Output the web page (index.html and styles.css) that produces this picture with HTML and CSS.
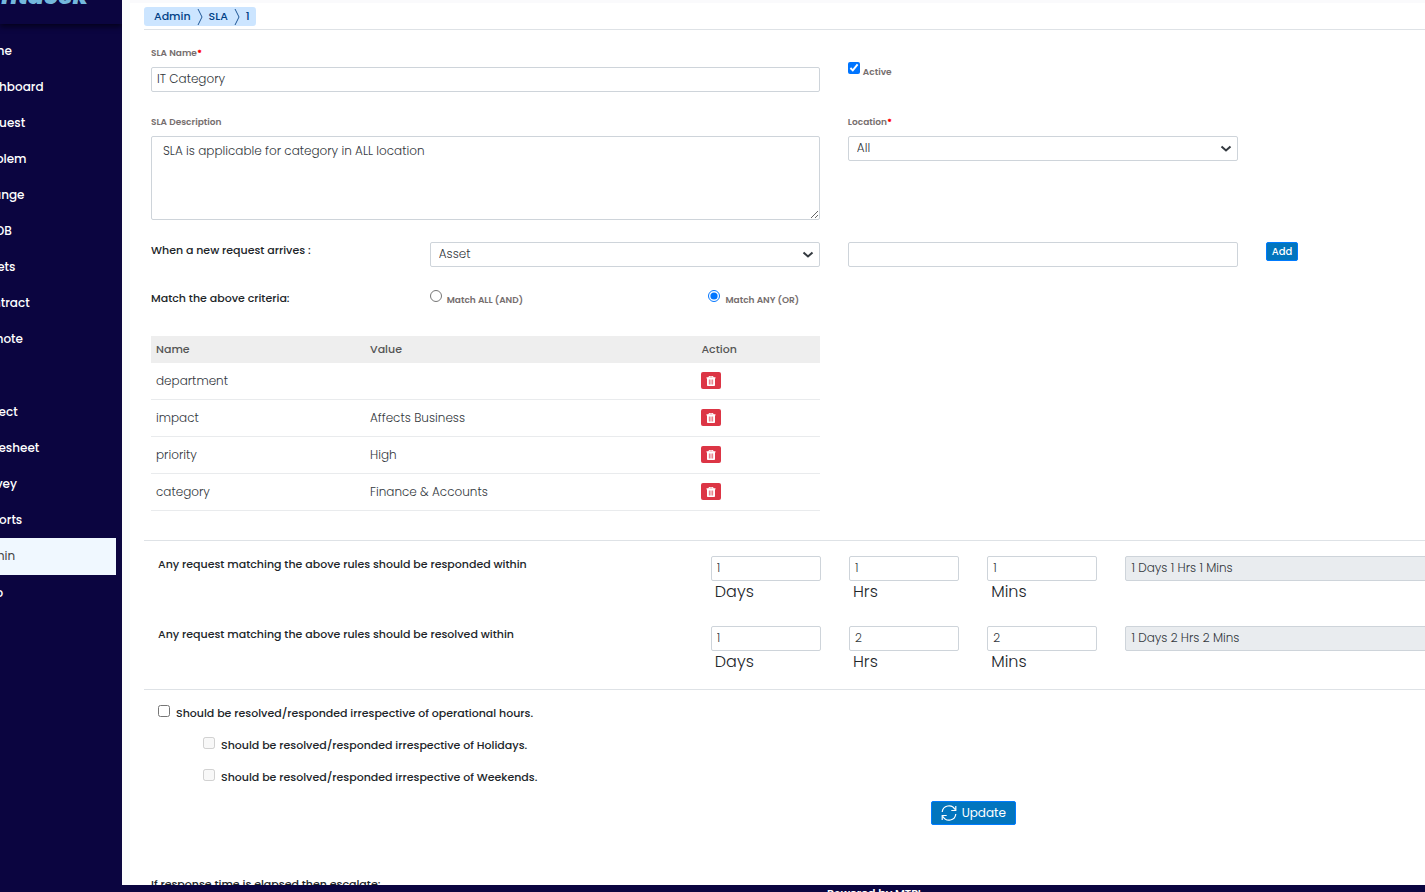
FILE: index.html
```
<!DOCTYPE html>
<html lang="en">
    <head>
        <meta charset="UTF-8">
        <meta name="viewport" content="width=device-width, initial-scale=1.0">
        <title>SLA</title>
        <link rel="stylesheet" href="styles.css">
    </head>
    <body>
        <svg class="sprite" aria-hidden="true">
            <symbol id="trash" viewBox="0 0 10 10">
                <path fill="#fff" fill-rule="evenodd" d="M3 0h4l.6 1.300H9.500v1.200H9V9.200q0 .8-.8.8H1.800q-.8 0-.8-.8V2.500H.5V1.300h1.900zM3.700.8l-.3.500h3.200L6.300.8zM2.900 3.600v5h.7v-5zM4.650 3.600v5h.7v-5zM6.400 3.600v5h.7v-5z"/>
            </symbol>
        </svg>

        <div class="wrapper">
            <aside class="sidebar">
                <div class="logo">frontdesk</div>
                <nav>
                    <a href="#">Home</a>
                    <a href="#">Dashboard</a>
                    <a href="#">Request</a>
                    <a href="#">Problem</a>
                    <a href="#">Change</a>
                    <a href="#">CMDB</a>
                    <a href="#">Assets</a>
                    <a href="#">Contract</a>
                    <a href="#">Remote</a>
                    <a href="#" class="group">Project</a>
                    <a href="#">Timesheet</a>
                    <a href="#">Survey</a>
                    <a href="#">Reports</a>
                    <a href="#" class="active">Admin</a>
                    <a href="#">Help</a>
                </nav>
            </aside>

            <main>
                <div class="breadcrumb-bar">
                    <div class="breadcrumb">
                        <a href="#">Admin</a>
                        <svg width="6" height="18" viewBox="0 0 6 18"><path d="M1 1l4 8-4 8"/></svg>
                        <a href="#">SLA</a>
                        <svg width="6" height="18" viewBox="0 0 6 18"><path d="M1 1l4 8-4 8"/></svg>
                        <a href="#">1</a>
                    </div>
                </div>

                <form class="content">
                    <div class="row name-row">
                        <div class="col-5">
                            <label class="title" for="slaName">SLA Name<b>*</b></label>
                            <input type="text" class="control" id="slaName" value="IT Category">
                        </div>
                        <div class="col-3 check">
                            <input type="checkbox" id="active" checked>
                            <label for="active">Active</label>
                        </div>
                    </div>

                    <div class="row desc-row">
                        <div class="col-5">
                            <label class="title" for="slaDesc">SLA Description</label>
                            <textarea class="control" id="slaDesc">SLA is applicable for category in ALL location</textarea>
                        </div>
                        <div class="col-3">
                            <label class="title" for="location">Location<b>*</b></label>
                            <div class="select">
                                <select class="control" id="location"><option>All</option></select>
                                <svg width="12" height="8" viewBox="0 0 12 8"><path d="M1.500 1.500L6 5.500l4.500-4"/></svg>
                            </div>
                        </div>
                    </div>

                    <div class="row criteria-row">
                        <label class="col-2 strong" for="field">When a new request arrives :</label>
                        <div class="col-3">
                            <div class="select">
                                <select class="control" id="field"><option>Asset</option></select>
                                <svg width="12" height="8" viewBox="0 0 12 8"><path d="M1.500 1.500L6 5.500l4.500-4"/></svg>
                            </div>
                        </div>
                        <div class="col-3">
                            <input type="text" class="control" aria-label="Value">
                        </div>
                        <div class="col-1">
                            <button type="button" class="btn btn-add">Add</button>
                        </div>
                    </div>

                    <div class="row match-row">
                        <span class="col-2 strong">Match the above criteria:</span>
                        <div class="col-2 check radio">
                            <input type="radio" name="match" id="matchAll">
                            <label for="matchAll">Match ALL (AND)</label>
                        </div>
                        <div class="col-2 check radio">
                            <input type="radio" name="match" id="matchAny" checked>
                            <label for="matchAny">Match ANY (OR)</label>
                        </div>
                    </div>

                    <div class="row">
                        <div class="col-5">
                            <table>
                                <thead>
                                    <tr><th class="name">Name</th><th class="value">Value</th><th>Action</th></tr>
                                </thead>
                                <tbody>
                                    <tr>
                                        <td>department</td>
                                        <td></td>
                                        <td><button type="button" class="delete" aria-label="Delete"><svg width="10" height="10"><use href="#trash"/></svg></button></td>
                                    </tr>
                                    <tr>
                                        <td>impact</td>
                                        <td>Affects Business</td>
                                        <td><button type="button" class="delete" aria-label="Delete"><svg width="10" height="10"><use href="#trash"/></svg></button></td>
                                    </tr>
                                    <tr>
                                        <td>priority</td>
                                        <td>High</td>
                                        <td><button type="button" class="delete" aria-label="Delete"><svg width="10" height="10"><use href="#trash"/></svg></button></td>
                                    </tr>
                                    <tr>
                                        <td>category</td>
                                        <td>Finance &amp; Accounts</td>
                                        <td><button type="button" class="delete" aria-label="Delete"><svg width="10" height="10"><use href="#trash"/></svg></button></td>
                                    </tr>
                                </tbody>
                            </table>
                        </div>
                    </div>

                    <section class="times">
                        <div class="row">
                            <span class="col-4 strong">Any request matching the above rules should be responded within</span>
                            <div class="col-1">
                                <input type="text" class="control" id="respDays" value="1">
                                <label class="unit" for="respDays">Days</label>
                            </div>
                            <div class="col-1">
                                <input type="text" class="control" id="respHrs" value="1">
                                <label class="unit" for="respHrs">Hrs</label>
                            </div>
                            <div class="col-1">
                                <input type="text" class="control" id="respMins" value="1">
                                <label class="unit" for="respMins">Mins</label>
                            </div>
                            <div class="col-3">
                                <input type="text" class="control" value="1 Days 1 Hrs 1 Mins" aria-label="Response time" readonly>
                            </div>
                        </div>
                        <div class="row">
                            <span class="col-4 strong">Any request matching the above rules should be resolved within</span>
                            <div class="col-1">
                                <input type="text" class="control" id="resDays" value="1">
                                <label class="unit" for="resDays">Days</label>
                            </div>
                            <div class="col-1">
                                <input type="text" class="control" id="resHrs" value="2">
                                <label class="unit" for="resHrs">Hrs</label>
                            </div>
                            <div class="col-1">
                                <input type="text" class="control" id="resMins" value="2">
                                <label class="unit" for="resMins">Mins</label>
                            </div>
                            <div class="col-3">
                                <input type="text" class="control" value="1 Days 2 Hrs 2 Mins" aria-label="Resolution time" readonly>
                            </div>
                        </div>
                    </section>

                    <section class="options">
                        <div class="option">
                            <input type="checkbox" id="hours">
                            <label class="strong" for="hours">Should be resolved/responded irrespective of operational hours.</label>
                        </div>
                        <div class="option sub">
                            <input type="checkbox" id="holidays" disabled>
                            <label class="strong" for="holidays">Should be resolved/responded irrespective of Holidays.</label>
                        </div>
                        <div class="option sub">
                            <input type="checkbox" id="weekends" disabled>
                            <label class="strong" for="weekends">Should be resolved/responded irrespective of Weekends.</label>
                        </div>
                    </section>

                    <div class="actions">
                        <button type="button" class="btn btn-update">
                            <svg width="16" height="16" viewBox="0 0 16 16"><path d="M1.200 7A6.800 6.800 0 0 1 14 4.500M14.800 1v4.500h-4.500M14.800 9A6.800 6.800 0 0 1 2 11.500M1.200 15v-4.500h4.500"/></svg>
                            Update
                        </button>
                    </div>

                    <p class="escalate strong">If response time is elapsed then escalate:</p>
                </form>
            </main>
        </div>

        <footer>Powered by MTPL</footer>
    </body>
</html>
```
FILE: styles.css
```
* {
    box-sizing: border-box;
}

body {
    margin: 0;
    height: 100vh;
    display: flex;
    flex-direction: column;
    overflow: hidden;
    background-color: #fafafc;
    font-family: Poppins, Inter, sans-serif;
    font-size: 12px;
    font-weight: 300;
    color: #212529;
}

a {
    text-decoration: none;
}

input, select, textarea, button {
    font-family: inherit;
    font-weight: inherit;
    margin: 0;
}

.sprite {
    position: absolute;
    width: 0;
    height: 0;
}

.wrapper {
    flex: 1;
    min-height: 0;
    display: flex;
}

/* sidebar */
.sidebar {
    width: 122px;
    flex-shrink: 0;
    overflow: hidden;
    background-color: #0b0540;
}

.logo {
    height: 28px;
    margin-top: -4px;
    padding-right: 34px;
    display: flex;
    justify-content: flex-end;
    font-size: 24px;
    font-weight: 800;
    font-style: italic;
    line-height: 0;
    color: #74b8dc;
    box-shadow: 0 3px 5px #05021f;
}

.sidebar nav {
    margin: 9px 6px 0 -40px;
}

.sidebar nav a {
    display: block;
    height: 36px;
    padding-left: 16px;
    font-weight: 500;
    line-height: 36px;
    color: #fff;
}

.sidebar nav a.group {
    margin-top: 37px;
}

.sidebar nav a.active {
    height: 37px;
    background-color: #f0f8ff;
    color: #444;
    font-weight: 400;
}

/* main */
main {
    flex: 1;
    min-width: 0;
    margin: 3px 0 0 8px;
    overflow: hidden;
    background-color: #fff;
}

.breadcrumb-bar {
    margin-left: 14px;
    padding: 4px 0 3px;
    display: flex;
    border-bottom: 1px solid #dee2e6;
}

.breadcrumb {
    height: 19px;
    padding: 0 6px 0 10px;
    display: flex;
    align-items: center;
    gap: 6px;
    border-radius: 3px;
    background-color: #cce5ff;
}

.breadcrumb a {
    font-size: 11px;
    font-weight: 500;
    color: #004085;
}

.breadcrumb path {
    fill: none;
    stroke: #1f5796;
}

.content {
    width: 130%;
    padding: 0 4px 0 7px;
}

.row {
    display: flex;
    align-items: flex-start;
}

.row > * {
    flex-shrink: 0;
    padding: 0 14px;
}

.col-1 { width: 8.333%; }
.col-2 { width: 16.666%; }
.col-3 { width: 25%; }
.col-4 { width: 33.333%; }
.col-5 { width: 41.666%; }

.name-row {
    height: 84px;
    padding-top: 15px;
}

.desc-row {
    height: 128px;
}

.criteria-row {
    height: 48px;
}

.match-row {
    height: 46px;
}

.title {
    display: block;
    height: 22px;
    font-size: 9px;
    font-weight: 600;
    line-height: 16px;
    color: #766e6e;
}

.title b {
    color: #f00;
}

.strong {
    font-size: 11px;
    font-weight: 500;
    line-height: 17px;
    white-space: nowrap;
}

.control {
    display: block;
    width: 100%;
    height: 25px;
    padding: 0 5px 2px;
    border: 1px solid #ced4da;
    border-radius: 2px;
    background-color: #fff;
    font-size: 12px;
    color: #33383d;
}

.control[readonly] {
    background-color: #e9ecef;
}

textarea.control {
    height: 84px;
    padding: 6px 11px;
    line-height: 16px;
}

.select {
    display: grid;
    align-items: center;
}

.select > * {
    grid-area: 1 / 1;
}

.select select {
    appearance: none;
    padding: 0 8px 2px;
}

.select svg {
    justify-self: end;
    margin-right: 6px;
    pointer-events: none;
}

.select path {
    fill: none;
    stroke: #343a40;
    stroke-width: 2;
}

.check {
    display: flex;
    padding-top: 17px;
    gap: 3px;
}

.check input, .option input {
    width: 12px;
    height: 12px;
    flex-shrink: 0;
}

.check label {
    margin-top: 2px;
    font-size: 9px;
    font-weight: 600;
    line-height: 16px;
    color: #766e6e;
}

.check.radio {
    padding-top: 0;
    gap: 5px;
}

.btn {
    display: block;
    border: 1px solid #007bff;
    border-radius: 2px;
    background-color: #0275be;
    color: #fff;
    font-weight: 500;
}

.btn-add {
    width: 32px;
    height: 19px;
    padding: 0;
    font-size: 10px;
}

/* criteria table */
table {
    width: 100%;
    table-layout: fixed;
    border-spacing: 0;
}

th, td {
    padding: 0 5px;
    text-align: left;
}

th {
    height: 27px;
    background-color: #eee;
    font-size: 11px;
    font-weight: 500;
    color: #555;
}

th.name {
    width: 32%;
}

th.value {
    width: 50%;
}

td {
    height: 37px;
    padding-bottom: 1px;
    border-bottom: 1px solid #e9ebed;
    color: #33383d;
}

th:last-child, td:last-child {
    padding-left: 2px;
}

.delete {
    width: 20px;
    height: 17px;
    padding: 0;
    display: flex;
    align-items: center;
    justify-content: center;
    border: none;
    border-radius: 2px;
    background-color: #dc3545;
}

/* response / resolve times */
.times {
    margin: 29px 7px 0;
    padding-top: 15px;
    border-top: 1px solid #dee2e6;
}

.times .row {
    height: 70px;
}

.unit {
    display: block;
    padding-left: 4px;
    font-size: 16px;
    line-height: 22px;
}

.options {
    margin: -7px 0 0 7px;
    padding: 15px 14px 0;
    border-top: 1px solid #dee2e6;
}

.option {
    height: 32px;
    display: flex;
    gap: 6px;
}

.option.sub {
    padding-left: 45px;
}

.actions {
    display: flex;
    justify-content: center;
}

.btn-update {
    height: 24px;
    padding: 0 9px;
    display: flex;
    align-items: center;
    gap: 5px;
    font-size: 12px;
    font-weight: 400;
}

.btn-update path {
    fill: none;
    stroke: #fff;
    stroke-width: 1.2;
}

.escalate {
    margin: 51px 14px 0;
}

footer {
    height: 7px;
    padding-left: 325px;
    overflow: hidden;
    background-color: #0b0540;
    color: #fff;
    font-size: 11px;
    font-weight: 600;
    line-height: 17px;
    text-align: center;
}
```
